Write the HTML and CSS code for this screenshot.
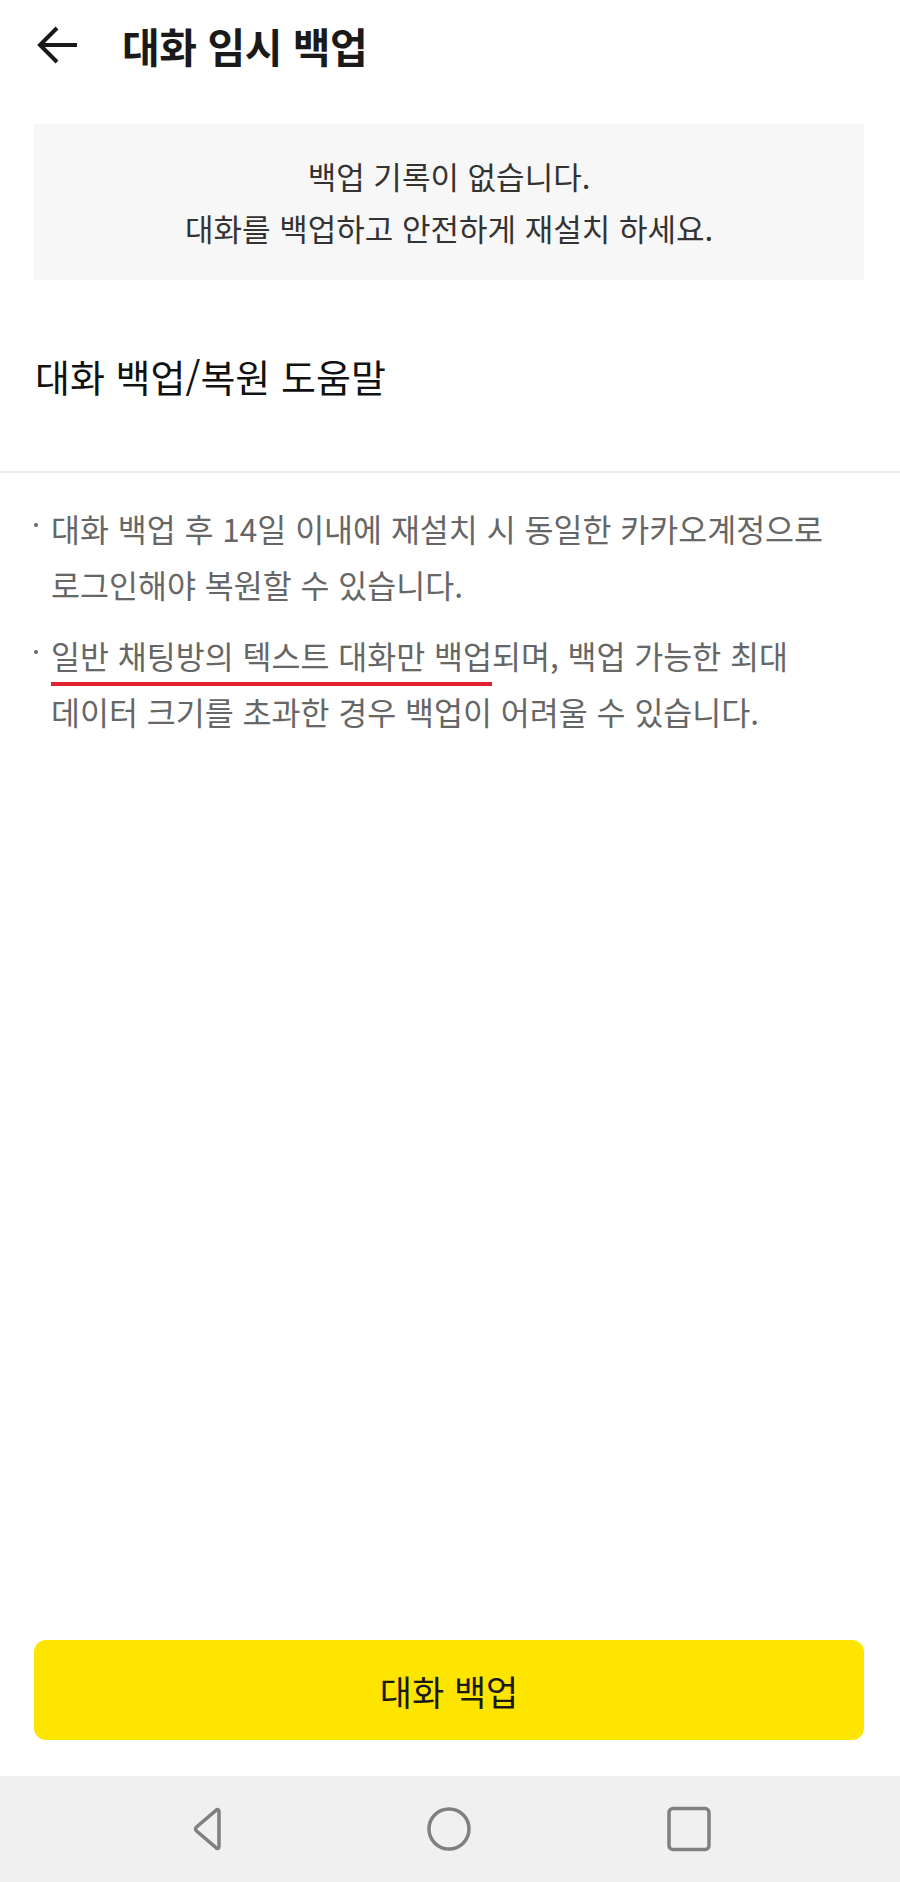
FILE: index.html
```html
<!DOCTYPE html>
<html lang="ko">
<head>
<meta charset="utf-8">
<title>대화 임시 백업</title>
<link rel="stylesheet" href="styles.css">
</head>
<body>
<div class="screen">
  <header class="appbar">
    <button class="back" aria-label="뒤로">
      <svg width="44" height="40" viewBox="0 0 44 40"><path d="M41 20H4M21 3L4 20l17 17" fill="none" stroke="#1a1a1a" stroke-width="4" stroke-linecap="butt" stroke-linejoin="miter"/></svg>
    </button>
    <h1 class="title">대화 임시 백업</h1>
  </header>

  <main class="content">
    <section class="status">
      <p>백업 기록이 없습니다.</p>
      <p>대화를 백업하고 안전하게 재설치 하세요.</p>
    </section>

    <h2 class="help-title">대화 백업/복원 도움말</h2>

    <ul class="notes">
      <li><span class="dot"></span><span class="txt">대화 백업 후 14일 이내에 재설치 시 동일한 카카오계정으로 로그인해야 복원할 수 있습니다.</span></li>
      <li><span class="dot"></span><span class="txt"><span class="mark">일반 채팅방의 텍스트 대화만 백업</span>되며, 백업 가능한 최대 데이터 크기를 초과한 경우 백업이 어려울 수 있습니다.</span></li>
    </ul>
  </main>

  <div class="actions">
    <button class="primary">대화 백업</button>
  </div>

  <nav class="sysnav">
    <svg width="44" height="46" viewBox="0 0 44 46"><path d="M31 5.5c0-2-1.6-2.6-3-1.2L8.5 21c-1.3 1.2-1.3 2.8 0 4L28 41.7c1.4 1.4 3 .8 3-1.2z" fill="none" stroke="#808080" stroke-width="3.5" stroke-linejoin="round"/></svg>
    <svg width="46" height="46" viewBox="0 0 46 46"><circle cx="23" cy="23" r="20" fill="none" stroke="#808080" stroke-width="3.5"/></svg>
    <svg width="46" height="46" viewBox="0 0 46 46"><rect x="3" y="2.5" width="40" height="41" rx="4" fill="none" stroke="#808080" stroke-width="3.5"/></svg>
  </nav>
</div>
</body>
</html>
```

FILE: styles.css
```css
* { box-sizing: border-box; }
html, body { margin: 0; padding: 0; }
body {
  background: #ffffff;
  font-family: "Noto Sans CJK KR", "Noto Sans", sans-serif;
  color: #1a1a1a;
}
.screen {
  width: 900px;
  height: 1882px;
  display: flex;
  flex-direction: column;
}
.appbar {
  height: 90px;
  display: flex;
  align-items: center;
  padding-left: 36px;
}
.back {
  border: 0;
  background: none;
  padding: 0;
  width: 44px;
  height: 40px;
  display: flex;
  margin-right: 42px;
}
.title {
  margin: 0;
  font-size: 41px;
  font-weight: 700;
  letter-spacing: -0.5px;
  color: #1a1a1a;
  line-height: 1;
}
.content {
  flex: 1;
  display: flex;
  flex-direction: column;
}
.status {
  margin: 34px 36px 0 34px;
  height: 156px;
  background: #f7f7f7;
  display: flex;
  flex-direction: column;
  align-items: center;
  justify-content: center;
}
.status p {
  margin: 0;
  font-size: 31px;
  line-height: 52px;
  color: #333333;
}
.help-title {
  margin: 0;
  height: 193px;
  display: flex;
  align-items: center;
  padding-left: 35px;
  font-size: 38px;
  font-weight: 400;
  color: #111111;
  border-bottom: 2px solid #ebebeb;
}
.notes {
  list-style: none;
  margin: 0;
  padding: 27px 70px 0 34px;
  display: flex;
  flex-direction: column;
  gap: 15px;
}
.notes li {
  display: flex;
  font-size: 31.5px;
  line-height: 56px;
  color: #666666;
  word-break: keep-all;
}
.dot {
  width: 17px;
  flex: none;
  height: 56px;
  display: flex;
  align-items: center;
}
.dot::before {
  content: "";
  width: 4px;
  height: 4px;
  border-radius: 50%;
  background: #666666;
  margin-left: 0;
  margin-bottom: 6px;
}
.txt { flex: 1; }
.mark {
  text-decoration: underline;
  text-decoration-color: #e0232e;
  text-decoration-thickness: 4px;
  text-underline-offset: 13px;
  text-decoration-skip-ink: none;
}
.actions {
  padding: 0 36px 36px 34px;
}
.primary {
  width: 100%;
  height: 100px;
  border: 0;
  border-radius: 12px;
  background: #fee500;
  font-family: "Noto Sans CJK KR", "Noto Sans", sans-serif;
  font-size: 35px;
  color: #191919;
  padding: 0;
}
.sysnav {
  height: 106px;
  background: #f0f0f0;
  display: flex;
  align-items: center;
  justify-content: center;
  gap: 194px;
}
```
